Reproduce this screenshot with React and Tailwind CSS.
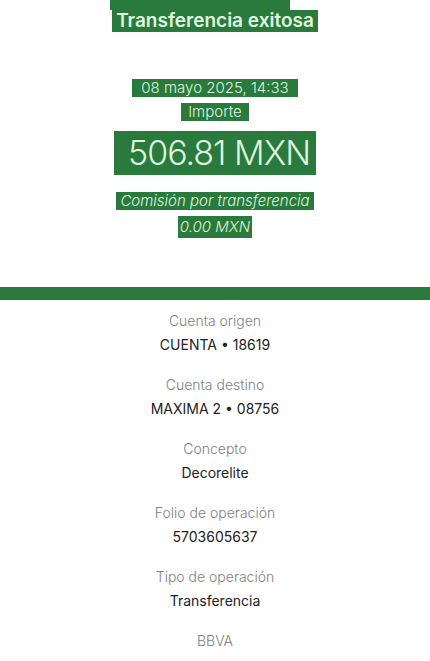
export default function App() {
  const rows = [
    ["Cuenta origen", "CUENTA • 18619"],
    ["Cuenta destino", "MAXIMA 2 • 08756"],
    ["Concepto", "Decorelite"],
    ["Folio de operación", "5703605637"],
    ["Tipo de operación", "Transferencia"],
  ];
  return (
    <div className="w-[430px] h-[661px] overflow-hidden bg-white text-center" style={{ fontFamily: "Inter, 'Noto Sans', sans-serif" }}>
      <div className="h-[287px] flex flex-col items-center">
        <div className="bg-[#2a7a3e] w-[180px] h-[10px] ml-[-30px]"></div>
        <span className="bg-[#2a7a3e] text-[#dff5df] text-[19px] font-semibold leading-[22px] px-[4px]">Transferencia exitosa</span>
        <div className="h-[47px]"></div>
        <span className="bg-[#2a7a3e] text-[#dff5df] text-[15px] font-light leading-[18px] px-[9px]">08 mayo 2025, 14:33</span>
        <div className="h-[6px]"></div>
        <span className="bg-[#2a7a3e] text-[#dff5df] text-[15px] font-light leading-[18px] px-[7px]">Importe</span>
        <div className="h-[10px]"></div>
        <span className="bg-[#2a7a3e] text-[#dff5df] text-[34px] font-light tracking-[-1px] leading-[44px] pl-[14px] pr-[6px]">506.81 MXN</span>
        <div className="h-[17px]"></div>
        <span className="bg-[#2a7a3e] text-[#dff5df] text-[15px] font-light italic leading-[18px] px-[4px]">Comisión por transferencia</span>
        <div className="h-[6px]"></div>
        <span className="bg-[#2a7a3e] text-[#dff5df] text-[15px] font-light italic leading-[22px] px-[2px]">0.00 MXN</span>
      </div>
      <div className="h-[13px] bg-[#2a7a3e]"></div>
      <div className="flex flex-col items-center pt-[12px]">
        {rows.map(([l, v]) => (
          <div key={l} className="flex flex-col items-center h-[64px]">
            <div className="text-[14px] font-light text-[#808080] leading-[18px]">{l}</div>
            <div className="text-[14px] text-[#222] leading-[18px] mt-[6px]">{v}</div>
          </div>
        ))}
        <div className="text-[14px] font-light text-[#808080] leading-[18px]">BBVA</div>
      </div>
    </div>
  );
}
